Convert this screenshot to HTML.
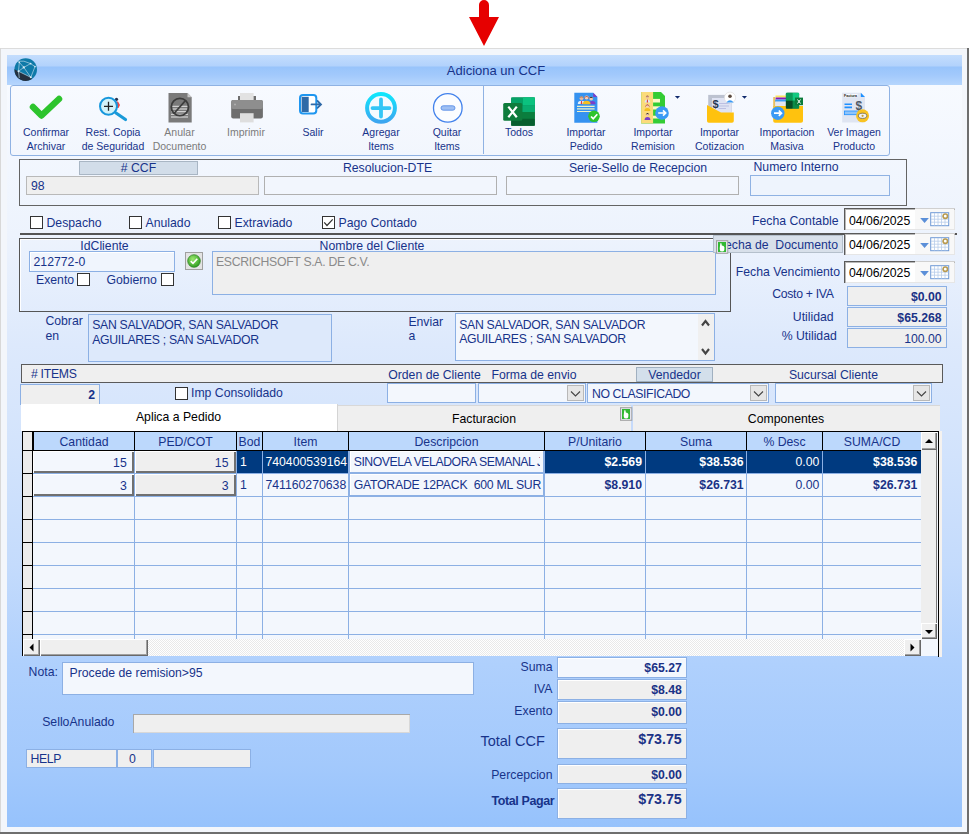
<!DOCTYPE html><html><head><meta charset="utf-8"><style>
html,body{margin:0;padding:0;width:969px;height:834px;overflow:hidden;background:#fff;position:relative;font-family:"Liberation Sans",sans-serif;}
div{position:absolute;box-sizing:content-box;}
.t{white-space:nowrap;line-height:1;}
</style></head><body>
<div style="left:0px;top:48px;width:969px;height:786px;background:#f3f6fb;"></div>
<div style="left:0px;top:48px;width:969px;height:1px;background:#dcdcdc;"></div>
<div style="left:0px;top:48px;width:1px;height:786px;background:#d8d8d8;"></div>
<div style="left:967px;top:48px;width:2px;height:786px;background:#6e6e6e;"></div>
<div style="left:0px;top:832px;width:969px;height:2px;background:#6e6e6e;"></div>
<div style="left:7px;top:55px;width:955px;height:30px;background:linear-gradient(#c4ddfd 0px,#b2d2fc 11px,#98c4fb 12px,#a2c9fc 20px,#b6d6fd 30px);"></div>
<div style="left:7px;top:85px;width:955px;height:742px;background:linear-gradient(#f7faff 0px,#edf3fd 150px,#dde9fc 260px,#d2e3fc 370px,#c4dbfc 480px,#afd0fd 580px,#a3c9fc 680px,#96c2fc 742px);"></div>
<svg style="position:absolute;left:0;top:0" width="969" height="50"><path d="M479,5 A5,5 0 0 1 489,5 L489,17 L499,17 L484,46 L469,17 L479,17 Z" fill="#e60000"/></svg>
<svg style="position:absolute;left:13px;top:57px" width="26" height="26" viewBox="0 0 26 26">
<circle cx="12.7" cy="12.55" r="11.3" fill="#0f7aa8"/>
<path d="M1.45,12.2 L5.5,14.3 L17.8,20.3 L18.9,22.1 A11.3,11.3 0 0 1 1.45,12.2 Z" fill="#24303f"/>
<g stroke="#a9cfe3" stroke-width="0.75" fill="none">
<path d="M6.3,5.4 L10.8,10.4 L17.8,20.3"/><path d="M10.8,10.4 L17.6,6.6 L22,9.6 L17.8,20.3"/><path d="M5.5,14.3 L10.8,10.4"/><path d="M6.3,5.4 L5.5,14.3 L6.3,21"/><path d="M4,4.2 Q11,3 17.6,6.6"/><path d="M5.5,14.3 L17.8,20.3"/></g>
<g fill="#d8ecf6"><circle cx="10.8" cy="10.4" r="1.1"/><circle cx="17.6" cy="6.6" r="0.9"/><circle cx="5.5" cy="14.3" r="1"/><circle cx="17.8" cy="20.3" r="1"/><circle cx="22" cy="9.6" r="0.8"/><circle cx="6.3" cy="5.4" r="0.8"/></g>
</svg>
<div class="t" style="left:346px;width:300px;text-align:center;top:63.95px;font-size:13px;color:#17338a;">Adiciona un CCF</div>
<div style="left:10px;top:85px;width:878px;height:69px;border:1px solid #8fb2e3;border-radius:3px;background:linear-gradient(#f7faff,#f2f6fd);"></div>
<div style="left:483px;top:86px;width:1px;height:68px;background:#8fb2e3;"></div>
<div class="t" style="left:-104px;width:300px;text-align:center;top:127.08px;font-size:10.5px;color:#17338a;">Confirmar</div>
<div class="t" style="left:-104px;width:300px;text-align:center;top:141.07px;font-size:10.5px;color:#17338a;">Archivar</div>
<div class="t" style="left:-37px;width:300px;text-align:center;top:127.08px;font-size:10.5px;color:#17338a;">Rest. Copia</div>
<div class="t" style="left:-37px;width:300px;text-align:center;top:141.07px;font-size:10.5px;color:#17338a;">de Seguridad</div>
<div class="t" style="left:29.5px;width:300px;text-align:center;top:127.08px;font-size:10.5px;color:#7b7b7b;">Anular</div>
<div class="t" style="left:29.5px;width:300px;text-align:center;top:141.07px;font-size:10.5px;color:#7b7b7b;">Documento</div>
<div class="t" style="left:96px;width:300px;text-align:center;top:127.08px;font-size:10.5px;color:#7b7b7b;">Imprimir</div>
<div class="t" style="left:163px;width:300px;text-align:center;top:127.08px;font-size:10.5px;color:#17338a;">Salir</div>
<div class="t" style="left:231px;width:300px;text-align:center;top:127.08px;font-size:10.5px;color:#17338a;">Agregar</div>
<div class="t" style="left:231px;width:300px;text-align:center;top:141.07px;font-size:10.5px;color:#17338a;">Items</div>
<div class="t" style="left:297px;width:300px;text-align:center;top:127.08px;font-size:10.5px;color:#17338a;">Quitar</div>
<div class="t" style="left:297px;width:300px;text-align:center;top:141.07px;font-size:10.5px;color:#17338a;">Items</div>
<div class="t" style="left:369px;width:300px;text-align:center;top:127.08px;font-size:10.5px;color:#17338a;">Todos</div>
<div class="t" style="left:436px;width:300px;text-align:center;top:127.08px;font-size:10.5px;color:#17338a;">Importar</div>
<div class="t" style="left:436px;width:300px;text-align:center;top:141.07px;font-size:10.5px;color:#17338a;">Pedido</div>
<div class="t" style="left:503px;width:300px;text-align:center;top:127.08px;font-size:10.5px;color:#17338a;">Importar</div>
<div class="t" style="left:503px;width:300px;text-align:center;top:141.07px;font-size:10.5px;color:#17338a;">Remision</div>
<div class="t" style="left:569.5px;width:300px;text-align:center;top:127.08px;font-size:10.5px;color:#17338a;">Importar</div>
<div class="t" style="left:569.5px;width:300px;text-align:center;top:141.07px;font-size:10.5px;color:#17338a;">Cotizacion</div>
<div class="t" style="left:637px;width:300px;text-align:center;top:127.08px;font-size:10.5px;color:#17338a;">Importacion</div>
<div class="t" style="left:637px;width:300px;text-align:center;top:141.07px;font-size:10.5px;color:#17338a;">Masiva</div>
<div class="t" style="left:704px;width:300px;text-align:center;top:127.08px;font-size:10.5px;color:#17338a;">Ver Imagen</div>
<div class="t" style="left:704px;width:300px;text-align:center;top:141.07px;font-size:10.5px;color:#17338a;">Producto</div>
<svg style="position:absolute;left:0;top:85px" width="969" height="45" viewBox="0 85 969 45">
<!-- check -->
<path d="M33,107 L41.5,115.5 L59,99" stroke="#2dc42d" stroke-width="6.5" stroke-linecap="round" stroke-linejoin="round" fill="none"/>
<!-- rest copia -->
<circle cx="116.5" cy="99.3" r="1.6" fill="#2a3550"/><path d="M115,101.5 h3 l2,3.5 l-1.5,3 h-3 z" fill="#f04848"/>
<line x1="116" y1="113" x2="125.5" y2="119.5" stroke="#1a9ad8" stroke-width="3.2" stroke-linecap="round"/>
<circle cx="108.5" cy="106.3" r="8.5" fill="#d3f3f9" stroke="#1797dc" stroke-width="2"/>
<path d="M104,106.3 h9 M108.5,101.8 v9" stroke="#222" stroke-width="1.3"/>
<!-- anular -->
<path d="M168.5,93 H187.5 L191.7,97.2 V122.6 H168.5 Z" fill="#7a7a7a"/><path d="M187.5,93 V97.2 H191.7 Z" fill="#c8c8c8"/>
<g stroke="#e6e6e6" stroke-width="1"><path d="M171,106.3 h17 M171,109 h17 M171,111.7 h17 M171,114.3 h17 M171,117 h17"/></g>
<circle cx="179.9" cy="107" r="8.6" fill="none" stroke="#3c3c3c" stroke-width="1.8"/><line x1="185.5" y1="100.5" x2="174" y2="113.5" stroke="#3c3c3c" stroke-width="1.8"/>
<!-- printer -->
<rect x="240" y="93" width="13.6" height="8" fill="#e2e2e2"/><rect x="238" y="96" width="2" height="5" fill="#6e6e6e"/><rect x="253.6" y="96" width="2.4" height="5" fill="#6e6e6e"/>
<rect x="231.2" y="100" width="31.7" height="18.4" rx="2" fill="#6e6e6e"/><rect x="231.2" y="100" width="31.7" height="9" rx="2" fill="#8e8e8e"/>
<circle cx="235" cy="104.5" r="1" fill="#b0b0b0"/>
<rect x="240" y="113.2" width="13.6" height="9.2" fill="#dedede"/>
<!-- salir -->
<rect x="300" y="95" width="16.3" height="18.5" rx="3" fill="#fff" stroke="#1e96f0" stroke-width="2"/>
<rect x="301.6" y="96.8" width="7.1" height="15.2" fill="#2f6aa8"/>
<path d="M311.5,104.4 H320.5 M317.5,101 L321,104.4 L317.5,107.8" stroke="#2f6aa8" stroke-width="1.8" fill="none" stroke-linecap="round"/>
<!-- agregar -->
<defs><linearGradient id="cy" x1="0" y1="0" x2="0" y2="1"><stop offset="0" stop-color="#10e6fc"/><stop offset="1" stop-color="#3ca6f0"/></linearGradient></defs>
<circle cx="381" cy="107.9" r="13.9" fill="#f4fbff" stroke="url(#cy)" stroke-width="4"/>
<path d="M372.5,108.1 H389.5 M381,99.5 V116.5" stroke="#33c6f6" stroke-width="3.8" stroke-linecap="round"/>
<!-- quitar -->
<circle cx="447.8" cy="107.9" r="14.3" fill="#fbfdff" stroke="#4282ec" stroke-width="1.3"/>
<rect x="441" y="105.8" width="14" height="4.4" rx="2.2" fill="#9fc0f3" stroke="#5a90e8" stroke-width="0.9"/>
<!-- excel -->
<rect x="511.2" y="97.4" width="23.6" height="28.4" rx="1.5" fill="#08753a"/>
<rect x="511.2" y="97.4" width="23.6" height="7.8" fill="#05a267"/><rect x="523" y="97.4" width="11.8" height="7.8" fill="#0bc27f"/>
<rect x="511.2" y="105.2" width="23.6" height="6.8" fill="#07a068"/><rect x="523" y="105.2" width="11.8" height="6.8" fill="#09ad70"/>
<rect x="511.2" y="112" width="23.6" height="6.8" fill="#0a7e3e"/><rect x="511.2" y="118.8" width="23.6" height="7" fill="#075f2f"/>
<rect x="503.2" y="103" width="19.1" height="17.8" rx="1.5" fill="#0e7c3c"/>
<path d="M508.3,106.6 L516.8,117.3 M516.8,106.6 L508.3,117.3" stroke="#fff" stroke-width="2.2"/>
<!-- importar pedido -->
<path d="M574.3,92.8 H593.2 L597.4,97 V122.8 H574.3 Z" fill="#3592f0"/><path d="M593.2,92.8 L597.4,97 H593.2 Z" fill="#7a3fc8"/>
<path d="M577.8,104 q0,-3.2 3.7,-3.2 q3.7,0 3.7,3.2 z" fill="#e6f0fa"/><path d="M581,101 h1 l0.3,3 h-1.6 z" fill="#e03a3a"/><circle cx="581.5" cy="98.2" r="1.9" fill="#e8b89a"/><path d="M579.6,97.8 q1.9,-2.8 3.8,0 q-1.9,-1 -3.8,0z" fill="#9a6040"/>
<path d="M589,104.3 q0,-3.2 3.3,-3.2 q3.3,0 3.3,3.2 z" fill="#7a3fc8"/><circle cx="591.2" cy="98.6" r="1.9" fill="#f2c8a8"/><path d="M589.2,98.4 q2,-3.2 4,0 q-2,-1.2 -4,0z" fill="#222"/>
<path d="M582.6,104.3 q0,-3.6 4,-3.6 q4,0 4,3.6 z" fill="#f4c020"/><circle cx="586.6" cy="97.5" r="2.1" fill="#f4d0b8"/><path d="M584.3,97.8 q2.3,-3.8 4.6,0 v1.5 q-0.5,-2.5 -2.3,-2.5 q-1.8,0 -2.3,2.5z" fill="#b04a3a"/>
<g stroke="#eef3c8" stroke-width="1.2"><path d="M577,106.4 H594.6 M577,108.8 H594.6 M577,111.5 H592"/></g>
<circle cx="594" cy="116.3" r="5.8" fill="#2dc42d"/><path d="M591,116.5 L593.2,118.7 L597.3,114.2" stroke="#fff" stroke-width="1.7" fill="none"/>
<!-- remision -->
<path d="M641.2,92 H661 L665,96 V123.4 H641.2 Z" fill="#34cc34"/><rect x="641.2" y="92" width="11.9" height="31.4" fill="#fbdb7a"/>
<g fill="#fdf7c8"><rect x="653" y="98.9" width="7" height="3.6"/><rect x="653" y="106.3" width="7" height="3.2"/><rect x="653" y="115.7" width="7" height="2.8"/></g>
<path d="M644.6,102.5 q0,-3 2.8,-3 q2.8,0 2.8,3 z" fill="#dde8f4"/><path d="M647,99.6 h0.8 l0.3,2.9 h-1.4z" fill="#e03a3a"/><circle cx="647.4" cy="97" r="1.6" fill="#e8b89a"/><path d="M645.8,96.8 q1.6,-2.4 3.2,0 q-1.6,-0.8 -3.2,0z" fill="#9a6040"/>
<path d="M644.4,111 q0,-3 3,-3 q3,0 3,3 z" fill="#f4c020"/><circle cx="647.4" cy="105.8" r="1.8" fill="#f4d0b8"/><path d="M645.4,106 q2,-3.4 4,0 v1.5 q-0.5,-2.3 -2,-2.3 q-1.5,0 -2,2.3z" fill="#b04a3a"/>
<path d="M644.6,120 q0,-3 2.9,-3 q2.9,0 2.9,3 z" fill="#7a3fc8"/><circle cx="647.5" cy="114.8" r="1.7" fill="#f2c8a8"/><path d="M645.7,114.6 q1.8,-3 3.6,0 q-1.8,-1.1 -3.6,0z" fill="#222"/>
<circle cx="662" cy="113" r="6.8" fill="#3a9af5"/><path d="M658.2,113 H665.5 M663,110.3 L665.7,113 L663,115.7" stroke="#fff" stroke-width="1.7" fill="none"/>
<path d="M674.9,95.9 H680.1 L677.5,98.8 Z" fill="#102a6c"/>
<!-- cotizacion -->
<rect x="708.2" y="94.9" width="23.5" height="17.5" fill="#bcc2d0"/><rect x="712" y="98" width="19.5" height="14.4" fill="#dfe3f3"/>
<text x="712.5" y="107.5" font-family="Liberation Sans" font-weight="bold" font-size="11" fill="#273a52">$</text>
<g stroke="#b8bce0" stroke-width="0.9"><path d="M719,103.5 H730 M719,106 H729 M718.5,108.5 H726"/></g>
<path d="M707,105 L721,112.5 H733.8 V121 Q733.8,122.7 732,122.7 H708.8 Q707,122.7 707,121 Z" fill="#ffc20e"/>
<circle cx="730" cy="97.7" r="5.6" fill="#fff" stroke="#d8d8d8" stroke-width="0.6"/><circle cx="730" cy="96.3" r="1.8" fill="#5a4a40"/><path d="M726.3,102.6 q3.7,-4.5 7.4,0 z" fill="#3a9af5"/>
<path d="M741.9,95.9 H747 L744.5,98.8 Z" fill="#102a6c"/>
<!-- masiva -->
<rect x="775.5" y="95.5" width="20" height="2" fill="#f8e860"/><rect x="775.5" y="97.5" width="20" height="2" fill="#8a1ab0"/><rect x="775" y="99.5" width="20" height="2.2" fill="#3a9af5"/><rect x="775.5" y="101.7" width="20" height="4.5" fill="#e2e6f2"/>
<path d="M773.2,106 H803 V121 Q803,122.8 801,122.8 H775 Q773.2,122.8 773.2,121 Z" fill="#ffc20e"/><rect x="773.2" y="97" width="2" height="10" fill="#e8c060"/>
<rect x="785.9" y="92.8" width="13.2" height="15.8" rx="1.5" fill="#0a6a34"/><rect x="785.9" y="92.8" width="6.6" height="8" fill="#0a9a58"/><rect x="792.5" y="92.8" width="6.6" height="8" fill="#12c980"/><rect x="792.5" y="100.8" width="6.6" height="7.8" fill="#0b8a48"/><rect x="785.9" y="100.8" width="6.6" height="7.8" fill="#064a26"/>
<rect x="795" y="97.6" width="8" height="7.6" fill="#0a7c3a"/><path d="M797.5,99.5 L800.5,103.5 M800.5,99.5 L797.5,103.5" stroke="#fff" stroke-width="1"/>
<circle cx="777.8" cy="113.2" r="6.7" fill="#3a9af5"/><path d="M774,113.2 H781.3 M778.8,110.5 L781.5,113.2 L778.8,115.9" stroke="#fff" stroke-width="1.7" fill="none"/>
<!-- ver imagen -->
<path d="M842.2,92.8 H860.8 L865,97 V122.5 H842.2 Z" fill="#dfe5f2"/><path d="M860.8,92.8 L865,97 H860.8 Z" fill="#1e90ff"/>
<rect x="844" y="94.2" width="13.5" height="3" fill="#fff"/><text x="844" y="97" font-family="Liberation Sans" font-weight="bold" font-size="3.6" fill="#111">Factura</text>
<g stroke="#1e90ff" stroke-width="1.6"><path d="M844.5,104.2 H852 M844.5,107.4 H852"/></g>
<rect x="844.5" y="111" width="14" height="3.7" fill="#8ec4fa" stroke="#1e90ff" stroke-width="0.8"/>
<text x="855.5" y="109.8" font-family="Liberation Sans" font-weight="bold" font-size="12" fill="#4d5866">$</text>
<circle cx="862.6" cy="115.8" r="6.5" fill="#f9c322"/><ellipse cx="862.6" cy="115.8" rx="4.2" ry="2.6" fill="#f2f2f2" stroke="#555" stroke-width="0.7"/><circle cx="862.6" cy="115.8" r="1.1" fill="#c8a030"/>
</svg>
<div style="left:19px;top:159px;width:886px;height:45px;border:1px solid #646464;"></div>
<div style="left:79px;top:161px;width:117px;height:12px;background:#d2dde9;border:1px solid #a9b6c4;"></div>
<div class="t" style="left:-11.5px;width:300px;text-align:center;top:162.09px;font-size:12.25px;color:#17338a;"># CCF</div>
<div style="left:26px;top:176px;width:231px;height:17px;background:#efefef;border:1px solid #b9b9b9;"></div>
<div class="t" style="left:31px;top:180.09px;font-size:12.25px;color:#17338a;">98</div>
<div class="t" style="left:237.5px;width:300px;text-align:center;top:162.09px;font-size:12.25px;color:#17338a;">Resolucion-DTE</div>
<div style="left:264px;top:176px;width:231px;height:17px;background:#f2f6fd;border:1px solid #b0b0b0;"></div>
<div class="t" style="left:488px;width:300px;text-align:center;top:162.09px;font-size:12.25px;color:#17338a;">Serie-Sello de Recepcion</div>
<div style="left:506px;top:176px;width:231px;height:17px;background:#f2f6fd;border:1px solid #b0b0b0;"></div>
<div class="t" style="left:753.5px;top:160.89px;font-size:12.25px;color:#17338a;">Numero Interno</div>
<div style="left:750px;top:175px;width:138px;height:19px;background:#eef4fd;border:1px solid #8fb2e3;"></div>
<div style="left:30px;top:216px;width:11px;height:11px;border:1px solid #333;background:#fff;"></div>
<div class="t" style="left:46.5px;top:216.59px;font-size:12.25px;color:#17338a;">Despacho</div>
<div style="left:129px;top:216px;width:11px;height:11px;border:1px solid #333;background:#fff;"></div>
<div class="t" style="left:145.5px;top:216.59px;font-size:12.25px;color:#17338a;">Anulado</div>
<div style="left:218px;top:216px;width:11px;height:11px;border:1px solid #333;background:#fff;"></div>
<div class="t" style="left:234.5px;top:216.59px;font-size:12.25px;color:#17338a;">Extraviado</div>
<div style="left:322px;top:216px;width:11px;height:11px;border:1px solid #333;background:#fff;"></div>
<svg style="position:absolute;left:322px;top:216px" width="13" height="13"><path d="M2.2,6.3 L5,9.5 L10.7,3.3" stroke="#333" stroke-width="1.2" fill="none"/></svg>
<div class="t" style="left:338.5px;top:216.59px;font-size:12.25px;color:#17338a;">Pago Contado</div>
<div class="t" style="left:438.5px;width:400px;text-align:right;top:215.09px;font-size:12.25px;color:#17338a;">Fecha Contable</div>
<div style="left:20px;top:233px;width:937px;height:2px;background:#555;"></div>
<div style="left:844px;top:208px;width:111px;height:22px;background:#fff;box-shadow:inset 1px 1px 0 #5a5a5a, inset 2px 2px 0 #b8b8b8, inset -1px -1px 0 #e6e6e6;"></div>
<div style="left:915px;top:208px;width:40px;height:1px;background:#d0d0d0;"></div>
<div style="left:915px;top:209px;width:39px;height:20px;background:#f8f8f8;"></div>
<div class="t" style="left:848.9px;top:214.59px;font-size:12.25px;color:#000;">04/06/2025</div>
<svg style="position:absolute;left:918px;top:208px" width="36" height="22"><path d="M2.2,10 H10.9 L6.55,15 Z" fill="#5b8fd8"/><rect x="12.7" y="4.7" width="18" height="13" fill="#fff" stroke="#6f9ad6" stroke-width="1"/><g stroke="#b8cdea" stroke-width="0.8"><path d="M13,8.2 H30.5 M13,11.2 H30.5 M13,14.2 H30.5 M16.5,5 V17.5 M20,5 V17.5 M23.5,5 V17.5 M27,5 V17.5"/></g><circle cx="27.3" cy="8.2" r="2.2" fill="#fff" stroke="#b89a50" stroke-width="1.6"/></svg>
<div style="left:844px;top:233px;width:111px;height:22px;background:#fff;box-shadow:inset 1px 1px 0 #5a5a5a, inset 2px 2px 0 #b8b8b8, inset -1px -1px 0 #e6e6e6;"></div>
<div style="left:915px;top:233px;width:40px;height:1px;background:#d0d0d0;"></div>
<div style="left:915px;top:234px;width:39px;height:20px;background:#f8f8f8;"></div>
<div class="t" style="left:848.9px;top:239.19px;font-size:12.25px;color:#000;">04/06/2025</div>
<svg style="position:absolute;left:918px;top:233px" width="36" height="22"><path d="M2.2,10 H10.9 L6.55,15 Z" fill="#5b8fd8"/><rect x="12.7" y="4.7" width="18" height="13" fill="#fff" stroke="#6f9ad6" stroke-width="1"/><g stroke="#b8cdea" stroke-width="0.8"><path d="M13,8.2 H30.5 M13,11.2 H30.5 M13,14.2 H30.5 M16.5,5 V17.5 M20,5 V17.5 M23.5,5 V17.5 M27,5 V17.5"/></g><circle cx="27.3" cy="8.2" r="2.2" fill="#fff" stroke="#b89a50" stroke-width="1.6"/></svg>
<div style="left:844px;top:261px;width:111px;height:22px;background:#fff;box-shadow:inset 1px 1px 0 #5a5a5a, inset 2px 2px 0 #b8b8b8, inset -1px -1px 0 #e6e6e6;"></div>
<div style="left:915px;top:261px;width:40px;height:1px;background:#d0d0d0;"></div>
<div style="left:915px;top:262px;width:39px;height:20px;background:#f8f8f8;"></div>
<div class="t" style="left:848.9px;top:267.39px;font-size:12.25px;color:#000;">04/06/2025</div>
<svg style="position:absolute;left:918px;top:261px" width="36" height="22"><path d="M2.2,10 H10.9 L6.55,15 Z" fill="#5b8fd8"/><rect x="12.7" y="4.7" width="18" height="13" fill="#fff" stroke="#6f9ad6" stroke-width="1"/><g stroke="#b8cdea" stroke-width="0.8"><path d="M13,8.2 H30.5 M13,11.2 H30.5 M13,14.2 H30.5 M16.5,5 V17.5 M20,5 V17.5 M23.5,5 V17.5 M27,5 V17.5"/></g><circle cx="27.3" cy="8.2" r="2.2" fill="#fff" stroke="#b89a50" stroke-width="1.6"/></svg>
<div style="left:19px;top:238px;width:710px;height:72px;border:1px solid #555;box-shadow:inset 1px 1px 0 #fff;"></div>
<div class="t" style="left:-45.5px;width:300px;text-align:center;top:240.39px;font-size:12.25px;color:#17338a;">IdCliente</div>
<div style="left:29px;top:251px;width:144px;height:19px;background:#f0f5fd;border:1px solid #8cb0e4;box-shadow:inset 1px 1px 0 #fff;"></div>
<div class="t" style="left:33.5px;top:255.59px;font-size:12.25px;color:#17338a;">212772-0</div>
<div class="t" style="left:36px;top:273.59px;font-size:12.25px;color:#17338a;">Exento</div>
<div style="left:77px;top:273px;width:11px;height:11px;border:1px solid #333;background:#fff;"></div>
<div class="t" style="left:106.5px;top:273.59px;font-size:12.25px;color:#17338a;">Gobierno</div>
<div style="left:161px;top:273px;width:11px;height:11px;border:1px solid #333;background:#fff;"></div>
<div style="left:185px;top:252px;width:16px;height:16px;background:#e4e4e4;border:1px solid #a0a0a0;"></div>
<svg style="position:absolute;left:185px;top:252px" width="18" height="18"><defs><radialGradient id="gg" cx="0.4" cy="0.35" r="0.7"><stop offset="0" stop-color="#9be86e"/><stop offset="1" stop-color="#2a9a1e"/></radialGradient></defs><circle cx="9" cy="9" r="6.3" fill="url(#gg)" stroke="#2a7a20" stroke-width="0.7"/><path d="M5.7,9.2 L8,11.4 L12.3,6.8" stroke="#fff" stroke-width="1.6" fill="none"/></svg>
<div class="t" style="left:222px;width:300px;text-align:center;top:239.89px;font-size:12.25px;color:#17338a;">Nombre del Cliente</div>
<div style="left:212px;top:251px;width:502px;height:42px;background:#efefef;border:1px solid #8cb0e4;"></div>
<div class="t" style="left:216px;top:255.59px;font-size:12.25px;color:#8a8a8a;letter-spacing:-0.3px;">ESCRICHSOFT S.A. DE C.V.</div>
<div style="left:713px;top:235px;width:128px;height:16px;background:#d8e0ea;border:1px solid #b5c0cc;"></div>
<div class="t" style="left:727px;top:239.19px;width:111px;overflow:hidden;font-size:12.25px;color:#17338a;"><div style="position:relative;float:right;">Fecha de&nbsp; Documento</div></div>
<svg style="position:absolute;left:715px;top:240px" width="14" height="14"><rect x="1.5" y="0.7" width="11.3" height="12.6" fill="#e4e4ee" stroke="#a0a0a0" stroke-width="1"/><rect x="3" y="2" width="8" height="10" fill="#33b833"/><path d="M5.4,11.3 C4.7,10.2 4.6,8.4 4.9,6.8 L5.3,3.4 Q5.9,2.6 6.5,3.4 L6.8,5.6 Q9,5.9 9.4,7.3 L9.3,9.9 Q8.9,11.6 7.2,11.6 Z" fill="#fff"/></svg>
<div class="t" style="left:440px;width:400px;text-align:right;top:266.09px;font-size:12.25px;color:#17338a;">Fecha Vencimiento</div>
<div class="t" style="left:433.70000000000005px;width:400px;text-align:right;top:287.79px;font-size:12.25px;color:#17338a;letter-spacing:-0.3px;">Costo + IVA</div>
<div style="left:847px;top:286px;width:98px;height:18px;background:#efefef;border:1px solid #8cb0e4;"></div>
<div class="t" style="left:541.6px;width:400px;text-align:right;top:290.59px;font-size:12.25px;color:#1a3286;font-weight:bold;">$0.00</div>
<div class="t" style="left:433.70000000000005px;width:400px;text-align:right;top:311.49px;font-size:12.25px;color:#17338a;">Utilidad</div>
<div style="left:847px;top:307px;width:98px;height:18px;background:#efefef;border:1px solid #8cb0e4;"></div>
<div class="t" style="left:541.6px;width:400px;text-align:right;top:311.89px;font-size:12.25px;color:#1a3286;font-weight:bold;">$65.268</div>
<div class="t" style="left:436.79999999999995px;width:400px;text-align:right;top:330.49px;font-size:12.25px;color:#17338a;">% Utilidad</div>
<div style="left:847px;top:328px;width:98px;height:18px;background:#efefef;border:1px solid #8cb0e4;"></div>
<div class="t" style="left:541.6px;width:400px;text-align:right;top:332.59px;font-size:12.25px;color:#17338a;">100.00</div>
<div class="t" style="left:45.4px;top:314.89px;font-size:12.25px;color:#17338a;">Cobrar</div>
<div class="t" style="left:45.4px;top:329.59px;font-size:12.25px;color:#17338a;">en</div>
<div style="left:88px;top:314px;width:242px;height:46px;background:#dde9fb;border:1px solid #8cb0e4;"></div>
<div class="t" style="left:92.2px;top:318.89px;font-size:12.25px;color:#17338a;letter-spacing:-0.3px;">SAN SALVADOR, SAN SALVADOR</div>
<div class="t" style="left:92.2px;top:333.59px;font-size:12.25px;color:#17338a;letter-spacing:-0.3px;">AGUILARES ; SAN SALVADOR</div>
<div class="t" style="left:408.4px;top:316.39px;font-size:12.25px;color:#17338a;">Enviar</div>
<div class="t" style="left:408.4px;top:330.09px;font-size:12.25px;color:#17338a;">a</div>
<div style="left:455px;top:313px;width:258px;height:46px;background:#f3f7fd;border:1px solid #8cb0e4;"></div>
<div style="left:698px;top:314px;width:16px;height:46px;background:#f0f0f0;"></div>
<div class="t" style="left:459.2px;top:318.59px;font-size:12.25px;color:#17338a;letter-spacing:-0.3px;">SAN SALVADOR, SAN SALVADOR</div>
<div class="t" style="left:459.2px;top:333.29px;font-size:12.25px;color:#17338a;letter-spacing:-0.3px;">AGUILARES ; SAN SALVADOR</div>
<svg style="position:absolute;left:698px;top:314px" width="16" height="46"><path d="M4,11.5 L7.5,7 L11,11.5" stroke="#444" stroke-width="2.1" fill="none"/><path d="M4,35 L7.5,39.5 L11,35" stroke="#444" stroke-width="2.1" fill="none"/></svg>
<div style="left:21px;top:364px;width:920px;height:17px;background:#efefef;border:1px solid #5a5a5a;"></div>
<div class="t" style="left:31px;top:367.59px;font-size:12.25px;color:#17338a;letter-spacing:-0.3px;"># ITEMS</div>
<div class="t" style="left:284.5px;width:300px;text-align:center;top:369.19px;font-size:12.25px;color:#17338a;">Orden de Cliente</div>
<div class="t" style="left:384px;width:300px;text-align:center;top:369.19px;font-size:12.25px;color:#17338a;">Forma de envio</div>
<div style="left:636px;top:367px;width:75px;height:13px;background:#d3dfeb;border:1px solid #a0b0c0;"></div>
<div class="t" style="left:524.5px;width:300px;text-align:center;top:369.19px;font-size:12.25px;color:#17338a;">Vendedor</div>
<div class="t" style="left:683.5px;width:300px;text-align:center;top:369.19px;font-size:12.25px;color:#17338a;">Sucursal Cliente</div>
<div style="left:20px;top:384px;width:78px;height:19px;background:#efefef;border:1px solid #8cb0e4;"></div>
<div class="t" style="left:-305px;width:400px;text-align:right;top:388.59px;font-size:12.25px;color:#17338a;font-weight:bold;">2</div>
<div style="left:175px;top:387px;width:11px;height:11px;border:1px solid #333;background:#fff;"></div>
<div class="t" style="left:191px;top:387.09px;font-size:12.25px;color:#17338a;">Imp Consolidado</div>
<div style="left:387px;top:383px;width:87px;height:18px;background:#f3f7fd;border:1px solid #8cb0e4;"></div>
<div style="left:478px;top:383px;width:106px;height:18px;background:#f3f7fd;border:1px solid #8cb0e4;"></div>
<div style="left:567px;top:385px;width:15px;height:14px;background:#e6e6e6;border:1px solid #b8b8b8;"></div>
<svg style="position:absolute;left:567px;top:385px" width="17" height="16"><path d="M4,6.5 L8.5,11 L13,6.5" stroke="#444" stroke-width="1.1" fill="none"/></svg>
<div style="left:587px;top:383px;width:180px;height:18px;background:#f3f7fd;border:1px solid #8cb0e4;"></div>
<div style="left:750px;top:385px;width:15px;height:14px;background:#e6e6e6;border:1px solid #b8b8b8;"></div>
<svg style="position:absolute;left:750px;top:385px" width="17" height="16"><path d="M4,6.5 L8.5,11 L13,6.5" stroke="#444" stroke-width="1.1" fill="none"/></svg>
<div class="t" style="left:592px;top:387.99px;font-size:12.25px;color:#17338a;letter-spacing:-0.39px;">NO CLASIFICADO</div>
<div style="left:775px;top:383px;width:155px;height:18px;background:#f3f7fd;border:1px solid #8cb0e4;"></div>
<div style="left:913px;top:385px;width:15px;height:14px;background:#e6e6e6;border:1px solid #b8b8b8;"></div>
<svg style="position:absolute;left:913px;top:385px" width="17" height="16"><path d="M4,6.5 L8.5,11 L13,6.5" stroke="#444" stroke-width="1.1" fill="none"/></svg>
<div style="left:21px;top:404px;width:316px;height:27px;background:#fff;"></div>
<div style="left:337px;top:404px;width:1px;height:27px;background:#d4d4d4;"></div>
<div style="left:338px;top:405px;width:602px;height:26px;background:#efefef;border-top:1px solid #d8d8d8;"></div>
<div style="left:631px;top:405px;width:2px;height:26px;background:#c6dafa;"></div>
<div class="t" style="left:28.5px;width:300px;text-align:center;top:410.59px;font-size:12.25px;color:#000;">Aplica a Pedido</div>
<div class="t" style="left:334px;width:300px;text-align:center;top:412.59px;font-size:12.25px;color:#000;">Facturacion</div>
<div class="t" style="left:636px;width:300px;text-align:center;top:412.59px;font-size:12.25px;color:#000;">Componentes</div>
<svg style="position:absolute;left:619px;top:407px" width="14" height="14"><rect x="1.5" y="0.7" width="11.3" height="12.6" fill="#e4e4ee" stroke="#a0a0a0" stroke-width="1"/><rect x="3" y="2" width="8" height="10" fill="#33b833"/><path d="M5.4,11.3 C4.7,10.2 4.6,8.4 4.9,6.8 L5.3,3.4 Q5.9,2.6 6.5,3.4 L6.8,5.6 Q9,5.9 9.4,7.3 L9.3,9.9 Q8.9,11.6 7.2,11.6 Z" fill="#fff"/></svg>
<div style="left:22px;top:431px;width:916px;height:225px;background:#f3f7fd;"></div>
<div style="left:33px;top:473px;width:888px;height:1px;background:#8cb0e4;"></div>
<div style="left:33px;top:496px;width:888px;height:1px;background:#8cb0e4;"></div>
<div style="left:33px;top:519px;width:888px;height:1px;background:#8cb0e4;"></div>
<div style="left:33px;top:542px;width:888px;height:1px;background:#8cb0e4;"></div>
<div style="left:33px;top:565px;width:888px;height:1px;background:#8cb0e4;"></div>
<div style="left:33px;top:588px;width:888px;height:1px;background:#8cb0e4;"></div>
<div style="left:33px;top:611px;width:888px;height:1px;background:#8cb0e4;"></div>
<div style="left:33px;top:634px;width:888px;height:1px;background:#8cb0e4;"></div>
<div style="left:134px;top:450px;width:1px;height:189px;background:#8cb0e4;"></div>
<div style="left:236px;top:450px;width:1px;height:189px;background:#8cb0e4;"></div>
<div style="left:262px;top:450px;width:1px;height:189px;background:#8cb0e4;"></div>
<div style="left:348px;top:450px;width:1px;height:189px;background:#8cb0e4;"></div>
<div style="left:544px;top:450px;width:1px;height:189px;background:#8cb0e4;"></div>
<div style="left:645px;top:450px;width:1px;height:189px;background:#8cb0e4;"></div>
<div style="left:746px;top:450px;width:1px;height:189px;background:#8cb0e4;"></div>
<div style="left:822px;top:450px;width:1px;height:189px;background:#8cb0e4;"></div>
<div style="left:33px;top:432px;width:888px;height:18px;background:#bcd8fc;"></div>
<div style="left:22px;top:431px;width:916px;height:1px;background:#000;"></div>
<div style="left:33px;top:450px;width:888px;height:1px;background:#000;"></div>
<div style="left:33px;top:432px;width:1px;height:18px;background:#000;"></div>
<div style="left:134px;top:432px;width:1px;height:18px;background:#000;"></div>
<div style="left:236px;top:432px;width:1px;height:18px;background:#000;"></div>
<div style="left:262px;top:432px;width:1px;height:18px;background:#000;"></div>
<div style="left:348px;top:432px;width:1px;height:18px;background:#000;"></div>
<div style="left:544px;top:432px;width:1px;height:18px;background:#000;"></div>
<div style="left:645px;top:432px;width:1px;height:18px;background:#000;"></div>
<div style="left:746px;top:432px;width:1px;height:18px;background:#000;"></div>
<div style="left:822px;top:432px;width:1px;height:18px;background:#000;"></div>
<div style="left:22px;top:431px;width:1px;height:225px;background:#000;"></div>
<div class="t" style="left:-66.0px;width:300px;text-align:center;top:435.89px;font-size:12.25px;color:#17338a;">Cantidad</div>
<div class="t" style="left:35.5px;width:300px;text-align:center;top:435.89px;font-size:12.25px;color:#17338a;">PED/COT</div>
<div class="t" style="left:99.5px;width:300px;text-align:center;top:435.89px;font-size:12.25px;color:#17338a;">Bod</div>
<div class="t" style="left:155.5px;width:300px;text-align:center;top:435.89px;font-size:12.25px;color:#17338a;">Item</div>
<div class="t" style="left:296.5px;width:300px;text-align:center;top:435.89px;font-size:12.25px;color:#17338a;">Descripcion</div>
<div class="t" style="left:445.0px;width:300px;text-align:center;top:435.89px;font-size:12.25px;color:#17338a;">P/Unitario</div>
<div class="t" style="left:546.0px;width:300px;text-align:center;top:435.89px;font-size:12.25px;color:#17338a;">Suma</div>
<div class="t" style="left:634.5px;width:300px;text-align:center;top:435.89px;font-size:12.25px;color:#17338a;">% Desc</div>
<div class="t" style="left:722.0px;width:300px;text-align:center;top:435.89px;font-size:12.25px;color:#17338a;">SUMA/CD</div>
<div style="left:23px;top:432px;width:9px;height:207px;background:#ececec;"></div>
<div style="left:32px;top:432px;width:1px;height:207px;background:#000;"></div>
<div style="left:23px;top:450px;width:10px;height:1px;background:#000;"></div>
<div style="left:23px;top:473px;width:10px;height:1px;background:#000;"></div>
<div style="left:23px;top:496px;width:10px;height:1px;background:#000;"></div>
<div style="left:23px;top:519px;width:10px;height:1px;background:#000;"></div>
<div style="left:23px;top:542px;width:10px;height:1px;background:#000;"></div>
<div style="left:23px;top:565px;width:10px;height:1px;background:#000;"></div>
<div style="left:23px;top:588px;width:10px;height:1px;background:#000;"></div>
<div style="left:23px;top:611px;width:10px;height:1px;background:#000;"></div>
<div style="left:23px;top:634px;width:10px;height:1px;background:#000;"></div>
<div style="left:33px;top:451px;width:101px;height:22px;background:#f3f7fd;box-shadow:inset 1px 1px 0 #fff, inset -2px -2px 0 #707070;"></div>
<div style="left:135px;top:451px;width:101px;height:22px;background:#efefef;box-shadow:inset 1px 1px 0 #fff, inset -2px -2px 0 #707070;"></div>
<div class="t" style="left:-273.3px;width:400px;text-align:right;top:457.19px;font-size:12.25px;color:#17338a;">15</div>
<div class="t" style="left:-171.5px;width:400px;text-align:right;top:457.19px;font-size:12.25px;color:#17338a;">15</div>
<div style="left:33px;top:474px;width:101px;height:22px;background:#f3f7fd;box-shadow:inset 1px 1px 0 #fff, inset -2px -2px 0 #707070;"></div>
<div style="left:135px;top:474px;width:101px;height:22px;background:#efefef;box-shadow:inset 1px 1px 0 #fff, inset -2px -2px 0 #707070;"></div>
<div class="t" style="left:-273.3px;width:400px;text-align:right;top:480.19px;font-size:12.25px;color:#17338a;">3</div>
<div class="t" style="left:-171.5px;width:400px;text-align:right;top:480.19px;font-size:12.25px;color:#17338a;">3</div>
<div style="left:237px;top:451px;width:111px;height:22px;background:#003a80;"></div>
<div style="left:545px;top:451px;width:376px;height:22px;background:#003a80;"></div>
<div style="left:262px;top:451px;width:1px;height:22px;background:#8cb0e4;"></div>
<div style="left:645px;top:451px;width:1px;height:22px;background:#8cb0e4;"></div>
<div style="left:746px;top:451px;width:1px;height:22px;background:#8cb0e4;"></div>
<div style="left:822px;top:451px;width:1px;height:22px;background:#8cb0e4;"></div>
<div style="left:348px;top:451px;width:197px;height:23px;box-shadow:inset 2px 0 0 #8cb0e4, inset -2px -2px 0 #8cb0e4, inset 3px 1px 0 #fff;background:#f3f7fd;"></div>
<div style="left:348px;top:474px;width:197px;height:23px;box-shadow:inset 2px 0 0 #8cb0e4, inset -2px -2px 0 #8cb0e4, inset 3px 1px 0 #fff;background:#f3f7fd;"></div>
<div class="t" style="left:239.9px;top:456.39px;font-size:12.25px;color:#fff;">1</div>
<div class="t" style="left:265.4px;top:456.39px;font-size:12.25px;color:#fff;width:83px;overflow:hidden;">740400539164</div>
<div class="t" style="left:353.7px;top:456.39px;font-size:12.25px;color:#17338a;letter-spacing:-0.45px;width:186px;overflow:hidden;">SINOVELA VELADORA SEMANAL J</div>
<div class="t" style="left:242px;width:400px;text-align:right;top:456.39px;font-size:12.25px;color:#fff;font-weight:bold;">$2.569</div>
<div class="t" style="left:343.6px;width:400px;text-align:right;top:456.39px;font-size:12.25px;color:#fff;font-weight:bold;">$38.536</div>
<div class="t" style="left:419.4px;width:400px;text-align:right;top:456.39px;font-size:12.25px;color:#fff;">0.00</div>
<div class="t" style="left:517.4px;width:400px;text-align:right;top:456.39px;font-size:12.25px;color:#fff;font-weight:bold;">$38.536</div>
<div class="t" style="left:239.9px;top:479.39px;font-size:12.25px;color:#17338a;">1</div>
<div class="t" style="left:265.4px;top:479.39px;font-size:12.25px;color:#17338a;width:83px;overflow:hidden;">741160270638</div>
<div class="t" style="left:353.7px;top:479.39px;font-size:12.25px;color:#17338a;letter-spacing:-0.23px;width:188px;overflow:hidden;">GATORADE 12PACK&nbsp; 600 ML SUR</div>
<div class="t" style="left:242px;width:400px;text-align:right;top:479.39px;font-size:12.25px;color:#1a3286;font-weight:bold;">$8.910</div>
<div class="t" style="left:343.6px;width:400px;text-align:right;top:479.39px;font-size:12.25px;color:#1a3286;font-weight:bold;">$26.731</div>
<div class="t" style="left:419.4px;width:400px;text-align:right;top:479.39px;font-size:12.25px;color:#17338a;">0.00</div>
<div class="t" style="left:517.4px;width:400px;text-align:right;top:479.39px;font-size:12.25px;color:#1a3286;font-weight:bold;">$26.731</div>
<div style="left:921px;top:432px;width:15px;height:207px;background:#eeeeee;"></div>
<div style="left:936px;top:432px;width:1px;height:207px;background:#7a7a7a;"></div>
<div style="left:939px;top:431px;width:3px;height:226px;background:#f5f2ef;"></div>
<div style="left:921px;top:432px;width:16px;height:18px;background:#efefef;box-shadow:inset 1px 1px 0 #fff, inset -1px -1px 0 #696969, inset -2px -2px 0 #a0a0a0;"></div>
<svg style="position:absolute;left:921px;top:432px" width="16" height="18"><polygon points="4,10 8,6 12,10" fill="#000" transform="translate(0.0,1.0)"/></svg>
<div style="left:921px;top:623px;width:16px;height:16px;background:#efefef;box-shadow:inset 1px 1px 0 #fff, inset -1px -1px 0 #696969, inset -2px -2px 0 #a0a0a0;"></div>
<svg style="position:absolute;left:921px;top:623px" width="16" height="16"><polygon points="4,7 8,11 12,7" fill="#000" transform="translate(0.0,0.0)"/></svg>
<div style="left:938px;top:431px;width:1px;height:226px;background:#000;"></div>
<div style="left:23px;top:639px;width:898px;height:17px;background:repeating-conic-gradient(#ffffff 0 25%, #e9e9e9 0 50%) 0 0/2px 2px;"></div>
<div style="left:23px;top:639px;width:17px;height:17px;background:#efefef;"></div>
<div style="left:23px;top:639px;width:17px;height:17px;background:#efefef;box-shadow:inset 1px 1px 0 #fff, inset -1px -1px 0 #696969, inset -2px -2px 0 #a0a0a0;"></div>
<svg style="position:absolute;left:23px;top:639px" width="17" height="17"><polygon points="10,4 6,8 10,12" fill="#000" transform="translate(0.5,0.5)"/></svg>
<div style="left:40px;top:639px;width:108px;height:17px;background:#efefef;box-shadow:inset 1px 1px 0 #fff, inset -1px -1px 0 #696969, inset -2px -2px 0 #a0a0a0;"></div>
<div style="left:904px;top:639px;width:17px;height:17px;background:#efefef;box-shadow:inset 1px 1px 0 #fff, inset -1px -1px 0 #696969, inset -2px -2px 0 #a0a0a0;"></div>
<svg style="position:absolute;left:904px;top:639px" width="17" height="17"><polygon points="6,4 10,8 6,12" fill="#000" transform="translate(0.5,0.5)"/></svg>
<div style="left:921px;top:639px;width:17px;height:17px;background:#f3f7fd;"></div>
<div class="t" style="left:28.6px;top:665.59px;font-size:12.25px;color:#17338a;">Nota:</div>
<div style="left:62px;top:662px;width:410px;height:31px;background:#f3f7fd;border:1px solid #8cb0e4;"></div>
<div class="t" style="left:69.5px;top:666.89px;font-size:12.25px;color:#17338a;">Procede de remision&gt;95</div>
<div class="t" style="left:42.2px;top:716.39px;font-size:12.25px;color:#17338a;">SelloAnulado</div>
<div style="left:133px;top:714px;width:277px;height:19px;background:#efefef;box-shadow:inset 1px 1px 0 #a8a8a8, inset -1px -1px 0 #d8d8d8;"></div>
<div style="left:26px;top:749px;width:89px;height:17px;background:#efefef;border:1px solid #8cb0e4;"></div>
<div class="t" style="left:30.4px;top:753.09px;font-size:12.25px;color:#17338a;letter-spacing:-0.3px;">HELP</div>
<div style="left:117px;top:749px;width:33px;height:17px;background:#efefef;border:1px solid #8cb0e4;"></div>
<div class="t" style="left:-17.5px;width:300px;text-align:center;top:753.09px;font-size:12.25px;color:#17338a;">0</div>
<div style="left:153px;top:749px;width:96px;height:17px;background:#efefef;border:1px solid #8cb0e4;"></div>
<div class="t" style="left:152.5px;width:400px;text-align:right;top:661.09px;font-size:12.25px;color:#17338a;">Suma</div>
<div style="left:557px;top:657px;width:128px;height:19px;background:#f3f7fd;border:1px solid #8cb0e4;box-shadow:inset 1px 1px 0 #fff;"></div>
<div class="t" style="left:281.79999999999995px;width:400px;text-align:right;top:661.89px;font-size:12.25px;color:#1a3286;font-weight:bold;">$65.27</div>
<div class="t" style="left:152.5px;width:400px;text-align:right;top:683.09px;font-size:12.25px;color:#17338a;">IVA</div>
<div style="left:557px;top:679px;width:128px;height:19px;background:#efefef;border:1px solid #8cb0e4;box-shadow:inset 1px 1px 0 #fff;"></div>
<div class="t" style="left:281.79999999999995px;width:400px;text-align:right;top:684.09px;font-size:12.25px;color:#1a3286;font-weight:bold;">$8.48</div>
<div class="t" style="left:152.5px;width:400px;text-align:right;top:705.09px;font-size:12.25px;color:#17338a;">Exento</div>
<div style="left:557px;top:701px;width:128px;height:21px;background:#efefef;border:1px solid #8cb0e4;box-shadow:inset 1px 1px 0 #fff;"></div>
<div class="t" style="left:281.79999999999995px;width:400px;text-align:right;top:706.09px;font-size:12.25px;color:#1a3286;font-weight:bold;">$0.00</div>
<div class="t" style="left:480.4px;top:734.38px;font-size:14.5px;color:#17338a;">Total CCF</div>
<div style="left:557px;top:728px;width:128px;height:29px;background:#efefef;border:1px solid #8cb0e4;box-shadow:inset 1px 1px 0 #fff;"></div>
<div class="t" style="left:281.79999999999995px;width:400px;text-align:right;top:731.89px;font-size:14.25px;color:#1a3286;font-weight:bold;">$73.75</div>
<div class="t" style="left:152.5px;width:400px;text-align:right;top:768.99px;font-size:12.25px;color:#17338a;">Percepcion</div>
<div style="left:557px;top:764px;width:128px;height:18px;background:#efefef;border:1px solid #8cb0e4;box-shadow:inset 1px 1px 0 #fff;"></div>
<div class="t" style="left:281.79999999999995px;width:400px;text-align:right;top:768.59px;font-size:12.25px;color:#1a3286;font-weight:bold;">$0.00</div>
<div class="t" style="left:491.5px;top:794.88px;font-size:12.5px;color:#17338a;font-weight:bold;letter-spacing:-0.4px;">Total Pagar</div>
<div style="left:557px;top:788px;width:128px;height:29px;background:#efefef;border:1px solid #8cb0e4;box-shadow:inset 1px 1px 0 #fff;"></div>
<div class="t" style="left:281.79999999999995px;width:400px;text-align:right;top:792.09px;font-size:14.25px;color:#1a3286;font-weight:bold;">$73.75</div>
</body></html>
